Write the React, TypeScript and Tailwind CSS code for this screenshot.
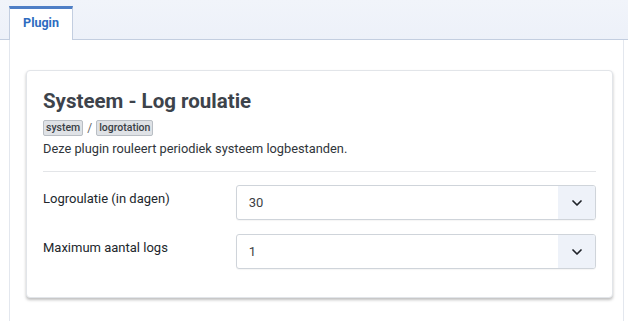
import { ChevronDown } from 'lucide-react';

const FIELDS = [
  { label: 'Logroulatie (in dagen)', value: '30' },
  { label: 'Maximum aantal logs', value: '1' },
];

function SelectBox({ value }: { value: string }) {
  return (
    <div className="flex h-[35px] w-[361px] items-stretch overflow-hidden rounded-[3px] border border-[#cfd4da] bg-white shadow-[0_1px_1px_rgba(0,0,0,0.04)]">
      <div className="flex flex-1 items-center pl-[12px] text-[13px] text-[#3c3f44]">{value}</div>
      <div className="flex w-[37px] items-center justify-center bg-[#eef2f9]">
        <ChevronDown size={16} strokeWidth={2.6} className="text-[#1f2329]" />
      </div>
    </div>
  );
}

export default function App() {
  return (
    <div className="h-[321px] w-[628px] overflow-hidden bg-white font-['Roboto',sans-serif]">
      <div className="flex h-[40px] items-end border-b border-[#c3cee0] bg-gradient-to-b from-[#f1f4fa] to-[#edf1f9] pl-[9px]">
        <div className="-mb-px flex h-[34px] w-[64px] items-center justify-center border-x border-t-[3px] border-x-[#c3cee0] border-t-[#4f7fc6] bg-white pb-[2px] text-[12.5px] font-bold text-[#2d6bc0]">
          Plugin
        </div>
      </div>

      <div className="ml-[9px] h-[281px] w-[615px] border-x border-[#e3e7ee] pl-[16px] pt-[30px]">
        <div className="w-[587px] rounded-[4px] border border-[#e2e5e9] bg-white px-[16px] pb-[28px] pt-[17px] shadow-[0_2px_3px_rgba(0,0,0,0.25)]">
          <h2 className="text-[20.5px] font-bold leading-[26px] text-[#3d434b]">Systeem - Log roulatie</h2>
          <div className="mt-[5px] flex items-center gap-[4px] text-[13px] text-[#555]">
            <span className="rounded-[2px] border border-[#b9bec4] bg-[#dfe2e6] px-[2px] text-[10.5px] font-medium leading-[14px] text-[#3a3f45]">
              system
            </span>
            <span className="text-[12px] text-[#666]">/</span>
            <span className="rounded-[2px] border border-[#b9bec4] bg-[#dfe2e6] px-[2px] text-[10.5px] font-medium leading-[14px] text-[#3a3f45]">
              logrotation
            </span>
          </div>
          <p className="mt-[3px] text-[12.8px] leading-[18px] text-[#30353a]">
            Deze plugin rouleert periodiek systeem logbestanden.
          </p>
          <div className="mt-[13px] mb-[13px] h-px bg-[#e3e5e8]" />
          <div className="flex flex-col gap-[14px]">
            {FIELDS.map((f) => (
              <div key={f.label} className="flex items-start">
                <div className="w-[193px] pt-[5px] text-[13px] leading-[17px] text-[#22272c]">{f.label}</div>
                <SelectBox value={f.value} />
              </div>
            ))}
          </div>
        </div>
      </div>
    </div>
  );
}
